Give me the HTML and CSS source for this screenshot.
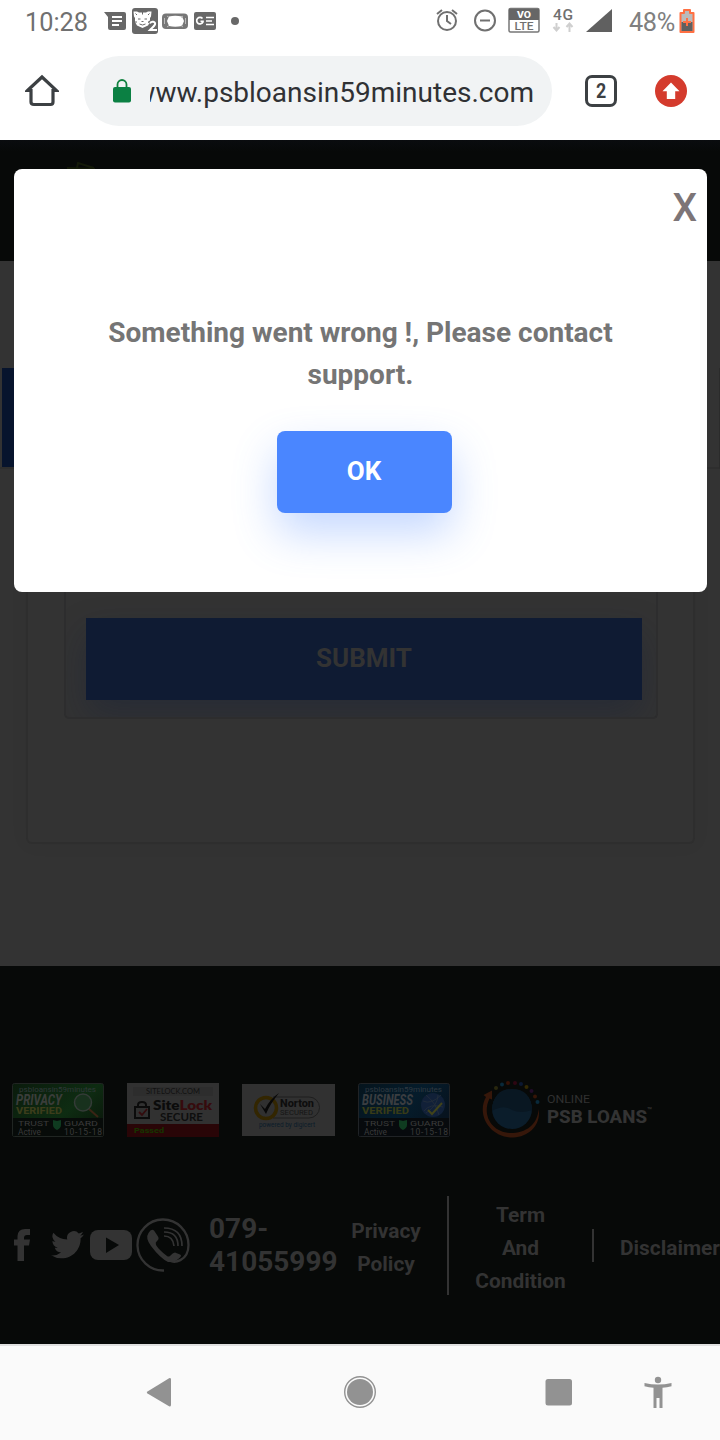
FILE: index.html
```html
<!DOCTYPE html>
<html lang="en">
<head>
<meta charset="utf-8">
<title>PSB Loans in 59 Minutes</title>
<link rel="stylesheet" href="styles.css">
</head>
<body>
<div class="phone">
  <header class="status">
    <span class="clock">10:28</span>
    <svg class="status-left" width="150" height="42" viewBox="0 0 150 42" fill="#686868">
      <path d="M4 12H24a2 2 0 0 1 2 2V28a2 2 0 0 1-2 2H10a2 2 0 0 1-2-2V17Z"/>
      <path d="M12 17h10M12 21h10M12 25h7" stroke="#fff" stroke-width="2"/>
      <rect x="32" y="8" width="26" height="26" rx="3"/>
      <path d="M33.500 11.500h3.500l2 1h7l2-1h3.500l-.5 5-1 1.500v4l-2 3.500-5.500 2.500-5.500-2.500-2-3.500v-4l-1-1.500Z" fill="#fff"/>
      <path d="M35.500 13.500l1.500 1.500M49.500 13.500l-1.500 1.500M42.500 12v2.500M38 19h2.500M44.500 19h2.500M35 22h2M48 22h2M41.500 21.500h2M39.500 24q3 2 6 0" stroke="#686868" stroke-width="1" fill="none"/>
      <path d="M50 23.500c1-3 6-2 5 1-1 2-3 3.500-5 5.500h7" stroke="#686868" stroke-width="4" fill="none"/>
      <path d="M50 23.500c1-3 6-2 5 1-1 2-3 3.500-5 5.500h7" stroke="#fff" stroke-width="2" fill="none"/>
      <rect x="62" y="13.500" width="26" height="15.500" rx="4" fill="#777"/>
      <path d="M69 16.500Q75 15 82 16.500L84 21l-2 5q-7 1.500-13 0l-2-5Z" fill="#fff"/>
      <path d="M64.500 18v6M85.500 18v6M67 16l2 1.500M83 16l-2 1.500M67 27l2-1.500M83 27l-2-1.500" stroke="#bbb"/>
      <rect x="94" y="12" width="22" height="18" rx="2"/>
      <path d="M102.500 18.500a3.300 3.300 0 1 0 .5 3.500V21.300h-2.500M106 17.500h8M106 21h6M106 24.500h8" fill="none" stroke="#fff" stroke-width="1.700"/>
      <circle cx="135" cy="21" r="4"/>
    </svg>
    <svg class="status-right" width="182" height="42" viewBox="0 0 182 42" fill="none" stroke="#707070">
      <circle cx="12" cy="21" r="9" stroke-width="2"/><path d="M12 15v6l4 3M2 14l5-4M22 14l-5-4" stroke-width="2"/>
      <circle cx="50" cy="20.500" r="10" stroke-width="2"/><path d="M45 20.500h10" stroke-width="2"/>
      <rect x="74" y="8.500" width="30" height="23.500" rx="1.500" stroke="#777" stroke-width="1.500"/><path d="M74 9h30v11H74z" fill="#666" stroke="none"/>
      <text class="svg-text heavy" x="82" y="18" font-size="9.500" textLength="14" lengthAdjust="spacingAndGlyphs" fill="#fff">VO</text>
      <text class="svg-text medium" x="79.500" y="30" font-size="11.500" textLength="19" lengthAdjust="spacingAndGlyphs" fill="#707070">LTE</text>
      <text class="svg-text medium" x="118" y="20" font-size="15.500" textLength="20" fill="#707070">4G</text>
      <path d="M121.500 23v7M118.500 27l3 3.500 3-3.500M134.500 32v-7M131.500 27l3-3.500 3 3.500" stroke="#cfcfcf" stroke-width="2"/>
      <path d="M151 32L177 9V32Z" fill="#606060" stroke="none"/>
    </svg>
    <span class="percent">48%</span>
    <svg class="battery" width="16" height="26" viewBox="0 0 16 26"><path d="M5 2h6v3h3.500v19h-13V5H5Z" fill="#bbb" stroke="#ff7043" stroke-width="2" stroke-linejoin="round"/><path d="M2.500 14h11v9h-11Z" fill="#606060"/><path d="M8 10v8M4 14h8" stroke="#ff7043" stroke-width="2"/></svg>
  </header>

  <div class="toolbar">
    <svg class="home" width="34" height="34" viewBox="0 0 34 34"><path d="M2.500 16.500L17 3l14.500 13.500H28V28q0 2.500-2.500 2.500H9Q6 30.500 6 28V16.500Z" fill="none" stroke="#3c4043" stroke-width="3.200"/></svg>
    <div class="omnibox">
      <svg width="18" height="24" viewBox="0 0 18 24"><path d="M4.500 9V5.500a4.500 4.500 0 0 1 9 0V9" fill="none" stroke="#10813f" stroke-width="1.800"/><rect y="8" width="18" height="15.500" rx="2" fill="#0b8043"/></svg>
      <div class="url"><span>www.psbloansin59minutes.com</span></div>
    </div>
    <div class="tab-count"><span>2</span></div>
    <svg class="update" width="32" height="32" viewBox="0 0 32 32"><circle cx="16" cy="16" r="16" fill="#d43b2d"/><path d="M16 7.500l8.500 8.700h-4.300V24h-8.400v-7.800H7.500Z" fill="#fff"/></svg>
  </div>

  <div class="viewport">
    <div class="site-header">
      <svg width="30" height="20" viewBox="0 0 30 20"><path d="M0 6l28 1M10 6l1-5 16 5" fill="none" stroke="#141a09" stroke-width="2"/></svg>
    </div>
    <main class="page">
      <div class="tabs"><div class="tab-active"></div></div>
      <div class="card"><div class="form-card"><div class="submit">SUBMIT</div></div></div>
    </main>
    <footer class="footer">
      <div class="badges">
        <svg class="badge-privacy" width="92" height="54" viewBox="0 0 92 54">
          <defs><linearGradient id="green" x2="1" y2=".7"><stop stop-color="#0a1b0c"/><stop offset=".65" stop-color="#0e2c12"/><stop offset="1" stop-color="#0a190b"/></linearGradient></defs>
          <rect x=".5" y=".5" width="91" height="53" rx="2" fill="url(#green)" stroke="#202522"/><path d="M1 35h90v18H1Z" fill="#070b09"/>
          <text class="svg-text" x="7" y="9" font-size="8" textLength="77" lengthAdjust="spacingAndGlyphs" fill="#30383a">psbloansin59minutes</text>
          <text class="svg-text heavy italic" x="4" y="22" font-size="14" textLength="46" lengthAdjust="spacingAndGlyphs" fill="#3a3d3a">PRIVACY</text>
          <text class="svg-text heavy" x="4" y="31" font-size="9" textLength="46" lengthAdjust="spacingAndGlyphs" fill="#3c3d1b">VERIFIED</text>
          <path d="M77 26l9 8" stroke="#3b2415" stroke-width="2"/><circle cx="71" cy="19.500" r="8.500" fill="#18311d" stroke="#343b37" stroke-width="1.500"/>
          <text class="svg-text" x="6" y="43" font-size="6.500" textLength="31" lengthAdjust="spacingAndGlyphs" fill="#3a3a3a">TRUST</text><path d="M41 37l4 1 4-1v5q0 3-4 5-4-2-4-5Z" fill="#0f3b20"/><text class="svg-text" x="52" y="43" font-size="6.500" textLength="34" lengthAdjust="spacingAndGlyphs" fill="#3a3a3a">GUARD</text>
          <text class="svg-text" x="6" y="51.500" font-size="8.500" textLength="23" lengthAdjust="spacingAndGlyphs" fill="#3a3a3a">Active</text><text class="svg-text" x="52" y="51.500" font-size="8.500" textLength="38" fill="#3a3a3a">10-15-18</text>
        </svg>
        <svg class="badge-sitelock" width="92" height="54" viewBox="0 0 92 54">
          <path d="M0 0h92v54H0Z" fill="#313131"/><path d="M6 4h80v9H6Z" fill="#2d2d2d"/><path d="M0 41h92v13H0Z" fill="#290507"/>
          <text class="svg-text lato" x="19" y="11" font-size="7.500" textLength="54" lengthAdjust="spacingAndGlyphs" fill="#111">SITELOCK.COM</text>
          <path d="M11 24v-2q0-3 4-3t4 3v2" fill="none" stroke="#0b0b0b" stroke-width="2"/><rect x="8" y="24" width="14" height="11" fill="#303030" stroke="#0b0b0b" stroke-width="2"/><path d="M12 29l3 3 5-6" fill="none" stroke="#330b0d" stroke-width="1.800"/>
          <text class="svg-text lato heavy" x="26" y="27" font-size="12.500" textLength="59" lengthAdjust="spacingAndGlyphs" fill="#0b0b0b">Site<tspan fill="#360b0d">Lock</tspan></text>
          <text class="svg-text lato bold" x="33" y="38" font-size="10.500" textLength="43" lengthAdjust="spacingAndGlyphs" fill="#0e0e0e">SECURE</text>
          <text class="svg-text heavy" x="7" y="50" font-size="7" textLength="30" lengthAdjust="spacingAndGlyphs" fill="#173300">Passed</text>
        </svg>
        <svg class="badge-norton" width="93" height="52" viewBox="0 0 93 52">
          <path d="M0 0h93v52H0Z" fill="#313131"/><path d="M31 13H67a10.500 10.500 0 0 1 0 21H31" fill="none" stroke="#1e1e1e"/>
          <circle cx="24" cy="24" r="10.500" fill="#303030" stroke="#332601" stroke-width="3.500"/><path d="M18 20l5 5Q28 15 37 9Q28 20 24 30Z" fill="#080808"/>
          <text class="svg-text heavy" x="38" y="23" font-size="11" textLength="34" lengthAdjust="spacingAndGlyphs" fill="#0d0d0d">Norton</text>
          <text class="svg-text" x="38" y="31" font-size="6.500" textLength="33" lengthAdjust="spacingAndGlyphs" fill="#151515">SECURED</text>
          <text class="svg-text" x="17" y="43" font-size="6.500" textLength="56" lengthAdjust="spacingAndGlyphs" fill="#0b1c2a">powered by digicert</text>
        </svg>
        <svg class="badge-business" width="92" height="54" viewBox="0 0 92 54">
          <defs><linearGradient id="blue" x2="1" y2=".5"><stop stop-color="#05141d"/><stop offset=".6" stop-color="#051c2b"/><stop offset="1" stop-color="#07131f"/></linearGradient></defs>
          <rect x=".5" y=".5" width="91" height="53" rx="2" fill="url(#blue)" stroke="#202326"/><path d="M1 35h90v18H1Z" fill="#070a0d"/>
          <text class="svg-text" x="7" y="9" font-size="8" textLength="77" lengthAdjust="spacingAndGlyphs" fill="#2f3941">psbloansin59minutes</text>
          <text class="svg-text heavy italic" x="4" y="22" font-size="14" textLength="51" lengthAdjust="spacingAndGlyphs" fill="#3a3d40">BUSINESS</text>
          <text class="svg-text heavy" x="4" y="31" font-size="9" textLength="47" lengthAdjust="spacingAndGlyphs" fill="#383b17">VERIFIED</text>
          <circle cx="75" cy="22" r="12" fill="#112038"/><path d="M65 18q8 4 18-6M66 28q6-8 19-4M68 12q10 8 13 20M80 12q0 10-12 18" fill="none" stroke="#252e3a" stroke-width=".8"/><path d="M70 27l4 4L84 20" fill="none" stroke="#41431a" stroke-width="2"/>
          <text class="svg-text" x="6" y="43" font-size="6.500" textLength="31" lengthAdjust="spacingAndGlyphs" fill="#3a3a3a">TRUST</text><path d="M41 37l4 1 4-1v5q0 3-4 5-4-2-4-5Z" fill="#0f3b20"/><text class="svg-text" x="52" y="43" font-size="6.500" textLength="34" lengthAdjust="spacingAndGlyphs" fill="#3a3a3a">GUARD</text>
          <text class="svg-text" x="6" y="51.500" font-size="8.500" textLength="23" lengthAdjust="spacingAndGlyphs" fill="#3a3a3a">Active</text><text class="svg-text" x="52" y="51.500" font-size="8.500" textLength="38" fill="#3a3a3a">10-15-18</text>
        </svg>
        <svg class="psb-logo" width="174" height="60" viewBox="0 0 174 60">
          <circle cx="30" cy="30" r="20" fill="#0b1d2b"/><path d="M10 32Q22 25 30 31q9 4 20 0-1-21-20-21T10 32Z" fill="#091722"/>
          <path d="M1.500 16L10 11.500v9l-2.500-1C-1 37 11 55 31 54 47 53 56 43 56.500 30c3 15-9 28-25 28.500C8 59-6 36 4 18Z" fill="#36170a"/>
          <g><circle cx="14" cy="9" r="2" fill="#29270d"/><circle cx="20" cy="5.500" r="2" fill="#09293a"/><circle cx="26" cy="4" r="2" fill="#351207"/><circle cx="33" cy="4" r="2" fill="#2d0612"/><circle cx="39" cy="5" r="2" fill="#0b1831"/><circle cx="44.500" cy="8" r="2" fill="#332903"/><circle cx="49.500" cy="12" r="2" fill="#210c28"/><circle cx="53" cy="17.500" r="2" fill="#361507"/><circle cx="55.500" cy="23" r="2" fill="#09293a"/></g>
          <text class="svg-text" x="65" y="23.500" font-size="11.500" textLength="43" lengthAdjust="spacingAndGlyphs" fill="#303030">ONLINE</text>
          <text class="svg-text heavy" x="65" y="43.500" font-size="18.500" textLength="100" lengthAdjust="spacingAndGlyphs" fill="#333">PSB LOANS</text>
          <text class="svg-text bold" x="165" y="34" font-size="8" fill="#333">™</text>
        </svg>
      </div>
      <div class="contact-row">
        <div class="socials">
          <svg class="facebook" width="17" height="34" viewBox="0 0 17 34"><path d="M3.500 33V17.500H0v-6h3.500V8Q4 1 11 1h5v6h-3q-3 0-3 3v1.500h6l-1 6h-5V33Z"/></svg>
          <svg class="twitter" width="33" height="28" viewBox="0 0 24 20"><path d="M24 2.300a9 9 0 0 1-2.800.8A5 5 0 0 0 23.300.4a10 10 0 0 1-3.100 1.200A4.900 4.900 0 0 0 11.800 6 14 14 0 0 1 1.700 1a4.900 4.900 0 0 0 1.500 6.600A5 5 0 0 1 1 7v.1a5 5 0 0 0 3.900 4.800 5 5 0 0 1-2.200.1 5 5 0 0 0 4.600 3.400A10 10 0 0 1 0 17.500a14 14 0 0 0 7.500 2.200c9.100 0 14.400-7.700 14-14.700A10 10 0 0 0 24 2.300Z"/></svg>
          <svg class="youtube" width="42" height="30" viewBox="0 0 42 30"><rect width="42" height="30" rx="8"/><path d="M16 7.500V23l13-8Z" fill="#070908"/></svg>
          <svg class="call" width="54" height="54" viewBox="0 0 54 54"><path d="M28 52.500A25.500 25.500 0 1 1 52.500 27c0 15-14 21-23 13" fill="none" stroke="#333" stroke-width="2.300"/><path d="M18 12.500l4 6q1.500 2.500-1 4.500-2 1.500-1 4 3 5 11 11 2 1.500 4-1t4-2.500l5 2q2 1 0 3-5 5-12 4.500Q24 40 15 28 9 20 12.500 15q3-5 5.500-2.500Z"/><path d="M28 18q9 0 10 10M28 14q14 0 14 14M28 10q18 0 18 18" fill="none" stroke="#333" stroke-width="1.700"/></svg>
        </div>
        <div class="phone-number">079-<br>41055999</div>
        <nav class="links">
          <span class="link privacy">Privacy<br>Policy</span>
          <span class="link terms"><span>Term<br>And<br>Condition</span></span>
          <span class="link disclaimer"><span>Disclaimer</span></span>
        </nav>
      </div>
    </footer>
    <section class="dialog">
      <div class="close">X</div>
      <p class="message">Something went wrong !, Please contact support.</p>
      <div class="ok">OK</div>
    </section>
  </div>

  <div class="navbar">
    <svg width="26" height="32" viewBox="0 0 26 32"><path d="M23.500 2L1.500 15.500Q0 16.500 1.500 17.500L23.500 30.500Q25 30.500 25 29V3Q25 2 23.500 2Z"/></svg>
    <svg class="nav-home" width="34" height="34" viewBox="0 0 34 34"><circle cx="17" cy="17" r="15.300" fill="none" stroke="#929292" stroke-width="1.400"/><circle cx="17" cy="17" r="13"/></svg>
    <svg class="nav-recent" width="28" height="28" viewBox="0 0 28 28"><rect x=".5" y="1" width="26.500" height="26.500" rx="2.500"/></svg>
    <svg class="nav-access" width="28" height="32" viewBox="0 0 28 32"><circle cx="14" cy="4" r="3.200"/><path d="M.5 7q13.500 3 27 0v3.300q-4.500 1.200-9 1.500V32h-3V22h-3v10h-3V11.800q-4.500-.3-9-1.500Z"/></svg>
  </div>
</div>
</body>
</html>
```
FILE: styles.css
```css
* { box-sizing: border-box; }
body { margin: 0; font-family: Roboto, sans-serif; background: #fff; }
svg { display: block; flex: none; }
.phone { width: 720px; height: 1440px; display: flex; flex-direction: column; overflow: hidden; }
.status { height: 42px; display: flex; align-items: center; color: #707070; flex: none; }
.clock { width: 76px; margin-left: 25px; font-size: 25.3px; line-height: 42px; padding-top: 4px; white-space: nowrap; }
.status-left { margin-left: -1px; }
.status-right { margin-left: 185px; }
.percent { margin-left: 12px; width: 47px; font-size: 25.3px; padding-top: 3px; letter-spacing: -0.4px; color: #808080; }
.battery { margin-left: 3px; }
.svg-text { font-family: Roboto, sans-serif; stroke: none; }
.heavy { font-weight: 800; }
.bold { font-weight: 700; }
.medium { font-weight: 500; }
.italic { font-style: italic; }
.lato { font-family: Lato, sans-serif; }

.toolbar { height: 98px; display: flex; align-items: center; flex: none; }
.home { margin-left: 25px; }
.omnibox { width: 468px; height: 70px; margin-left: 25px; border-radius: 35px; background: #f1f3f4; display: flex; align-items: center; padding-left: 29px; }
.url { width: 384px; margin-left: 19px; overflow: hidden; display: flex; justify-content: flex-end; color: #303134; font-size: 28px; line-height: 40px; padding-top: 3px; }
.tab-count { width: 32px; height: 32px; margin-left: 33px; border: 3px solid #3c4043; border-radius: 7px; color: #3c4043; font-size: 21px; line-height: 27px; font-weight: 700; text-align: center; }
.tab-count span { display: inline-block; transform: scaleX(.85); }
.update { margin-left: 38px; }

.viewport { height: 1204px; position: relative; overflow: hidden; background: #333; flex: none; }
.site-header { height: 121px; padding: 22px 0 0 67px; background: linear-gradient(#0a0c0f, #070908 12px); }
.page { height: 705px; padding-top: 107px; }
.tabs { height: 101px; padding-left: 2px; border-bottom: 2px solid #2e2e2e; border-right: 1px solid #2b2b2b; }
.tab-active { width: 340px; height: 99px; background: #07142d; }
.card { height: 364px; margin: 11px 25px 0 26px; padding: 10px 36px; border: 2px solid #2e2e2e; border-top: 0; border-radius: 6px; box-shadow: 0 0 18px rgba(0, 0, 0, .05); }
.form-card { height: 229px; padding: 128px 14px 17px 20px; border: 2px solid #2d2d2e; border-top: 0; border-radius: 5px; margin-right: -1px; overflow: hidden; }
.submit { height: 82px; background: #0f1b33; color: #333; font-size: 26px; font-weight: 700; line-height: 80px; text-align: center; box-shadow: 0 16px 36px rgba(15, 27, 60, .32); }

.footer { height: 378px; background: #070908; padding-top: 114px; overflow: hidden; }
.badges { height: 60px; display: flex; align-items: center; padding-left: 12px; }
.badges > svg + svg { margin-left: 23px; }
.badges > .psb-logo { margin-left: 32px; margin-top: -2px; }
.contact-row { height: 99px; width: 760px; margin-top: 56px; display: flex; align-items: center; color: #333; font-weight: 700; }
.socials { width: 209px; display: flex; align-items: center; padding: 0 0 2px 14px; fill: #333; }
.twitter { margin-left: 20px; }
.youtube { margin-left: 6px; }
.call { margin-left: 4px; }
.phone-number { width: 142px; margin-top: -2px; font-size: 28px; line-height: 33px; }
.links { display: flex; align-items: center; font-size: 20.9px; line-height: 33px; text-align: center; }
.privacy { width: 70px; margin-top: 4px; }
.terms { width: 147px; height: 99px; margin-left: 26px; padding-right: 2px; border-left: 2px solid #333; }
.disclaimer { height: 33px; margin-left: -2px; padding-left: 26px; border-left: 2px solid #333; }
.terms span, .disclaimer span { display: block; padding-top: 3px; }

.dialog { position: absolute; left: 14px; top: 29px; width: 693px; height: 423px; border-radius: 8px; background: #fff; overflow: hidden; color: #757575; }
.close { height: 78px; padding-right: 10px; font-size: 39px; line-height: 78px; text-align: right; color: #7d7577; font-weight: 500; }
.message { width: 520px; margin: 65px auto 0; font-size: 28px; line-height: 42px; font-weight: 700; text-align: center; }
.ok { width: 175px; height: 82px; margin: 35px 0 0 263px; padding-right: 1px; border-radius: 8px; background: #4a86ff; color: #fff; font-size: 26px; line-height: 80px; font-weight: 700; text-align: center; box-shadow: 0 20px 44px rgba(74, 134, 255, .32); }

.navbar { height: 96px; padding-bottom: 2px; border-top: 2px solid #e0e0e0; background: #fafafa; display: flex; align-items: center; padding-left: 146px; fill: #929292; flex: none; }
.nav-home { margin-left: 171px; }
.nav-recent { margin-left: 168px; }
.nav-access { margin-left: 71px; }
```
